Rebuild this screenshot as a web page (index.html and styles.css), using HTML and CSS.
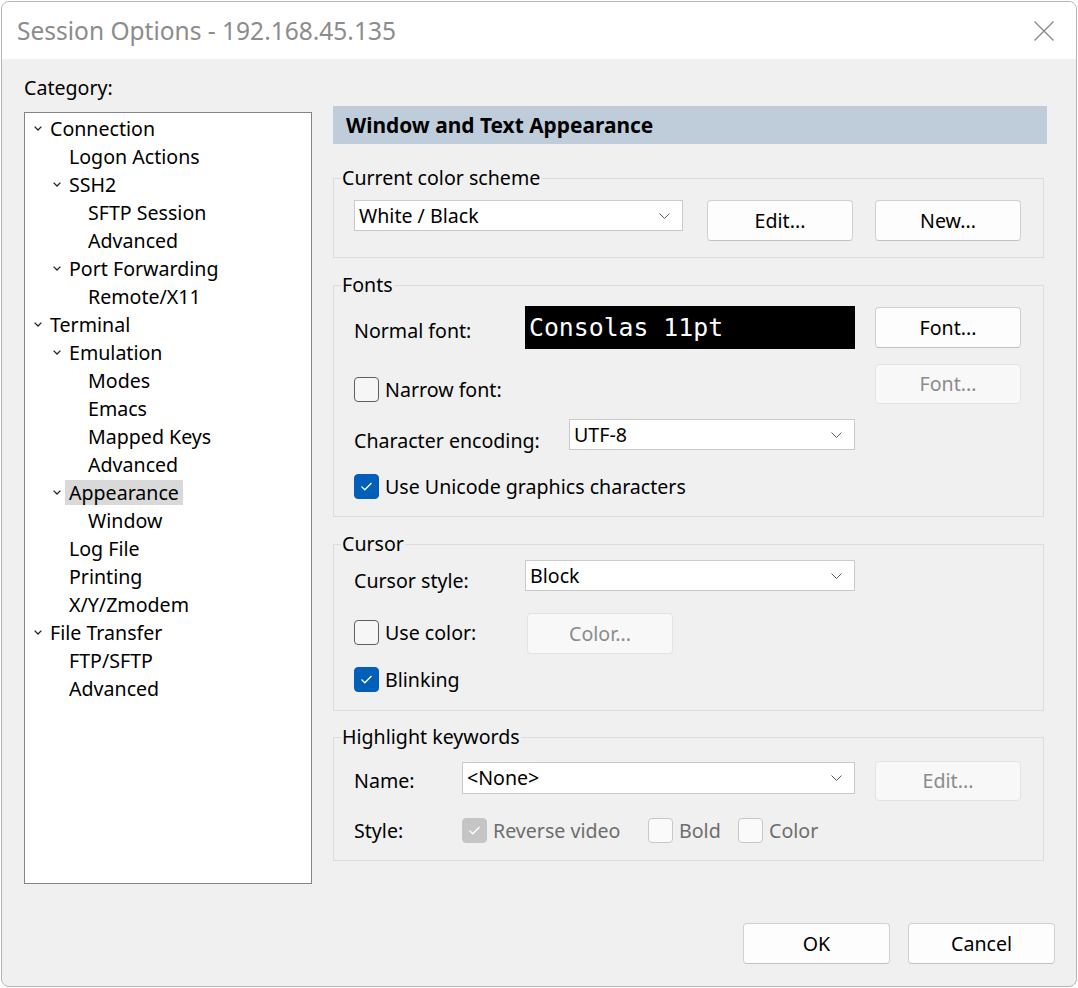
FILE: index.html
```html
<!DOCTYPE html>
<html>
<head>
<meta charset="utf-8">
<title>Session Options</title>
<link rel="stylesheet" href="styles.css">
</head>
<body>
<div class="window">
  <div class="titlebar">
    <span class="title">Session Options - 192.168.45.135</span>
    <svg class="close" width="20" height="20" viewBox="0 0 20 20"><path d="M0.5 0.5L19.5 19.5M19.5 0.5L0.5 19.5" stroke="#8a8a8a" stroke-width="1.4" fill="none"/></svg>
  </div>
  <div class="main">
    <div class="left">
      <div class="cat-label">Category:</div>
      <div class="tree">
        <div class="node l0"><span class="tw"><svg width="8" height="5" viewBox="0 0 8 5"><polyline points="0.6,0.6 4,4 7.4,0.6" fill="none" stroke="#222" stroke-width="1.3"/></svg></span><span class="nt">Connection</span></div>
        <div class="node l1"><span class="tw"></span><span class="nt">Logon Actions</span></div>
        <div class="node l1"><span class="tw"><svg width="8" height="5" viewBox="0 0 8 5"><polyline points="0.6,0.6 4,4 7.4,0.6" fill="none" stroke="#222" stroke-width="1.3"/></svg></span><span class="nt">SSH2</span></div>
        <div class="node l2"><span class="tw"></span><span class="nt">SFTP Session</span></div>
        <div class="node l2"><span class="tw"></span><span class="nt">Advanced</span></div>
        <div class="node l1"><span class="tw"><svg width="8" height="5" viewBox="0 0 8 5"><polyline points="0.6,0.6 4,4 7.4,0.6" fill="none" stroke="#222" stroke-width="1.3"/></svg></span><span class="nt">Port Forwarding</span></div>
        <div class="node l2"><span class="tw"></span><span class="nt">Remote/X11</span></div>
        <div class="node l0"><span class="tw"><svg width="8" height="5" viewBox="0 0 8 5"><polyline points="0.6,0.6 4,4 7.4,0.6" fill="none" stroke="#222" stroke-width="1.3"/></svg></span><span class="nt">Terminal</span></div>
        <div class="node l1"><span class="tw"><svg width="8" height="5" viewBox="0 0 8 5"><polyline points="0.6,0.6 4,4 7.4,0.6" fill="none" stroke="#222" stroke-width="1.3"/></svg></span><span class="nt">Emulation</span></div>
        <div class="node l2"><span class="tw"></span><span class="nt">Modes</span></div>
        <div class="node l2"><span class="tw"></span><span class="nt">Emacs</span></div>
        <div class="node l2"><span class="tw"></span><span class="nt">Mapped Keys</span></div>
        <div class="node l2"><span class="tw"></span><span class="nt">Advanced</span></div>
        <div class="node l1"><span class="tw"><svg width="8" height="5" viewBox="0 0 8 5"><polyline points="0.6,0.6 4,4 7.4,0.6" fill="none" stroke="#222" stroke-width="1.3"/></svg></span><span class="nt selected">Appearance</span></div>
        <div class="node l2"><span class="tw"></span><span class="nt">Window</span></div>
        <div class="node l1"><span class="tw"></span><span class="nt">Log File</span></div>
        <div class="node l1"><span class="tw"></span><span class="nt">Printing</span></div>
        <div class="node l1"><span class="tw"></span><span class="nt">X/Y/Zmodem</span></div>
        <div class="node l0"><span class="tw"><svg width="8" height="5" viewBox="0 0 8 5"><polyline points="0.6,0.6 4,4 7.4,0.6" fill="none" stroke="#222" stroke-width="1.3"/></svg></span><span class="nt">File Transfer</span></div>
        <div class="node l1"><span class="tw"></span><span class="nt">FTP/SFTP</span></div>
        <div class="node l1"><span class="tw"></span><span class="nt">Advanced</span></div>
      </div>
    </div>

    <div class="right">
      <div class="header">Window and Text Appearance</div>

      <fieldset class="group g1">
        <legend>Current color scheme</legend>
        <div class="row r-scheme">
          <div class="select w-scheme"><span>White / Black</span><svg class="chev" width="11" height="6" viewBox="0 0 11 6"><polyline points="0.5,0.5 5.5,5.5 10.5,0.5" fill="none" stroke="#5a5a5a" stroke-width="1"/></svg></div>
          <button class="btn b-edit">Edit...</button>
          <button class="btn b-new">New...</button>
        </div>
      </fieldset>

      <fieldset class="group g2">
        <legend>Fonts</legend>
        <div class="row r-normal">
          <span class="lbl w171 pt-normal">Normal font:</span>
          <div class="fontbox">Consolas 11pt</div>
          <button class="btn b-font">Font...</button>
        </div>
        <div class="row r-narrow">
          <label class="check ck-narrow"><span class="cb"></span><span>Narrow font:</span></label>
          <button class="btn disabled b-right">Font...</button>
        </div>
        <div class="row r-enc">
          <span class="lbl w215 pt-enc">Character encoding:</span>
          <div class="select w-enc"><span>UTF-8</span><svg class="chev" width="11" height="6" viewBox="0 0 11 6"><polyline points="0.5,0.5 5.5,5.5 10.5,0.5" fill="none" stroke="#5a5a5a" stroke-width="1"/></svg></div>
        </div>
        <div class="row r-unicode">
          <label class="check"><span class="cb checked"><svg width="25" height="25" viewBox="0 0 25 25"><polyline points="7.5,12.5 10.8,15.8 17.5,9" fill="none" stroke="#fff" stroke-width="1.3"/></svg></span><span>Use Unicode graphics characters</span></label>
        </div>
      </fieldset>

      <fieldset class="group g3">
        <legend>Cursor</legend>
        <div class="row r-cstyle">
          <span class="lbl w171 pt-cstyle">Cursor style:</span>
          <div class="select w-cstyle"><span>Block</span><svg class="chev" width="11" height="6" viewBox="0 0 11 6"><polyline points="0.5,0.5 5.5,5.5 10.5,0.5" fill="none" stroke="#5a5a5a" stroke-width="1"/></svg></div>
        </div>
        <div class="row r-ucolor">
          <label class="check ck-ucolor"><span class="cb"></span><span>Use color:</span></label>
          <button class="btn disabled b-color">Color...</button>
        </div>
        <div class="row r-blink">
          <label class="check"><span class="cb checked"><svg width="25" height="25" viewBox="0 0 25 25"><polyline points="7.5,12.5 10.8,15.8 17.5,9" fill="none" stroke="#fff" stroke-width="1.3"/></svg></span><span>Blinking</span></label>
        </div>
      </fieldset>

      <fieldset class="group g4">
        <legend>Highlight keywords</legend>
        <div class="row r-name">
          <span class="lbl w108 pt-name">Name:</span>
          <div class="select w-name"><span>&lt;None&gt;</span><svg class="chev" width="11" height="6" viewBox="0 0 11 6"><polyline points="0.5,0.5 5.5,5.5 10.5,0.5" fill="none" stroke="#5a5a5a" stroke-width="1"/></svg></div>
          <button class="btn disabled b-nedit">Edit...</button>
        </div>
        <div class="row r-style">
          <span class="lbl w108">Style:</span>
          <label class="check dis w-rev"><span class="cb dchecked"><svg width="25" height="25" viewBox="0 0 25 25"><polyline points="7.5,12.5 10.8,15.8 17.5,9" fill="none" stroke="#fff" stroke-width="1.3"/></svg></span><span>Reverse video</span></label>
          <label class="check dis w-bold"><span class="cb dunchecked"></span><span>Bold</span></label>
          <label class="check dis"><span class="cb dunchecked"></span><span>Color</span></label>
        </div>
      </fieldset>
    </div>
  </div>

  <div class="footer">
    <button class="btn b-ok">OK</button>
    <button class="btn b-cancel">Cancel</button>
  </div>
</div>
</body>
</html>
```

FILE: styles.css
```css
* { box-sizing: border-box; }

html, body {
  margin: 0;
  padding: 0;
  background: #ffffff;
}

.window {
  margin: 1px;
  width: 1076px;
  height: 986px;
  border: 1px solid #b5b5b5;
  border-radius: 8px;
  background: #f0f0f0;
  overflow: hidden;
  display: flex;
  flex-direction: column;
  font-family: "Noto Sans", "Open Sans", sans-serif;
  font-size: 19.6px;
  color: #000;
}

/* title bar */
.titlebar {
  height: 57px;
  flex: none;
  background: #ffffff;
  display: flex;
  align-items: center;
  justify-content: space-between;
  padding: 0 22px 0 15px;
}
.title {
  font-size: 24.5px;
  color: #8c8c8c;
  line-height: 30px;
}
.close { display: block; }

/* main */
.main {
  display: flex;
  padding-left: 22px;
  flex: none;
}
.left {
  width: 288px;
  flex: none;
  padding-top: 15px;
}
.cat-label {
  height: 28px;
  line-height: 28px;
  margin-bottom: 10px;
}
.tree {
  height: 772px;
  border: 1px solid #848484;
  background: #ffffff;
  padding-top: 1px;
}
.node {
  height: 28px;
  display: flex;
  align-items: center;
  white-space: nowrap;
}
.node.l0 { padding-left: 9px; }
.node.l1 { padding-left: 28px; }
.node.l2 { padding-left: 47px; }
.tw {
  width: 16px;
  flex: none;
  display: flex;
  align-items: center;
}
.tw svg { display: block; margin-top: 1px; }
.nt { line-height: 25px; }
.nt.selected {
  background: #d9d9d9;
  margin-left: -4px;
  padding: 0 4px;
}

.right {
  margin-left: 21px;
  width: 714px;
  flex: none;
  padding-top: 47px;
}
.header {
  height: 38px;
  line-height: 38px;
  background: #bfcddb;
  font-weight: bold;
  font-size: 20.9px;
  padding-left: 13px;
}

/* group boxes */
.group {
  border: 1px solid #dcdcdc;
  margin: 15px 3px 0 0;
  padding: 0 22px 16px 20px;
  min-width: 0;
}
.group legend {
  line-height: 24px;
  margin-left: -13px;
  padding: 0 1px;
}
.g1 { margin-top: 22px; }
.g2 { padding-bottom: 17px; }
.g3 { padding-bottom: 18px; }
.g4 { margin-top: 14px; padding-bottom: 17px; }

.row {
  display: flex;
  align-items: flex-start;
}
.lbl {
  flex: none;
  line-height: 24px;
}
.w171 { width: 171px; }
.w215 { width: 215px; }
.w108 { width: 108px; }

/* rows */
.r-scheme { margin-top: 10px; }
.r-normal { margin-top: 9px; align-items: center; height: 43px; }
.pt-normal { padding-top: 6px; }
.r-narrow { margin-top: 15px; }
.ck-narrow { margin-top: 13px; }
.r-enc { margin-top: 15px; }
.pt-enc { padding-top: 10px; }
.r-unicode { margin-top: 21px; }

.r-cstyle { margin-top: 4px; }
.pt-cstyle { padding-top: 9px; }
.r-ucolor { margin-top: 20px; }
.ck-ucolor { margin-top: 7px; width: 173px; }
.r-blink { margin-top: 13px; }

.r-name { margin-top: 12px; }
.pt-name { padding-top: 8px; }
.r-style { margin-top: 17px; align-items: center; }
.w-rev { width: 186px; }
.w-bold { width: 90px; }

/* select */
.select {
  height: 31px;
  background: #ffffff;
  border: 1px solid #cacaca;
  display: flex;
  align-items: center;
  justify-content: space-between;
  padding: 0 12px 0 4px;
  flex: none;
  line-height: 24px;
}
.chev { display: block; }
.w-scheme { width: 329px; }
.w-enc { width: 286px; }
.w-cstyle { width: 330px; }
.w-name { width: 393px; height: 32px; margin-top: 1px; }

/* buttons */
.btn {
  font: inherit;
  color: #000;
  width: 146px;
  height: 41px;
  background: #fdfdfd;
  border: 1px solid #d0d0d0;
  border-bottom-color: #c2c2c2;
  border-radius: 4px;
  padding: 0;
  flex: none;
  line-height: 24px;
}
.btn.disabled {
  background: #f8f8f8;
  border-color: #e3e3e3;
  color: #8b8b8b;
}
.b-edit { margin-left: 24px; }
.b-new { margin-left: 22px; }
.b-font { margin-left: 20px; }
.b-right { margin-left: auto; height: 40px; }
.b-color { margin-left: 0; }
.b-nedit { margin-left: 20px; height: 40px; }

/* font preview */
.fontbox {
  width: 330px;
  height: 43px;
  background: #000;
  color: #fff;
  font-family: "DejaVu Sans Mono", "Liberation Mono", monospace;
  font-size: 24.8px;
  line-height: 43px;
  padding-left: 4px;
  flex: none;
}

/* checkboxes */
.check {
  display: flex;
  align-items: center;
  gap: 6px;
  flex: none;
  line-height: 24px;
}
.cb {
  width: 25px;
  height: 25px;
  border: 1px solid #5f5f5f;
  border-radius: 4px;
  background: #f6f6f6;
  flex: none;
}
.cb svg { display: block; margin: -1px; }
.cb.checked {
  background: #005fb8;
  border-color: #005fb8;
}
.cb.dchecked {
  background: #c5c5c5;
  border-color: #c5c5c5;
}
.cb.dunchecked {
  background: #fafafa;
  border-color: #c8c8c8;
}
.check.dis { color: #6d6d6d; }

/* footer */
.footer {
  display: flex;
  justify-content: flex-end;
  gap: 18px;
  padding-right: 21px;
  margin-top: 39px;
}
.b-ok, .b-cancel { width: 147px; }
```
